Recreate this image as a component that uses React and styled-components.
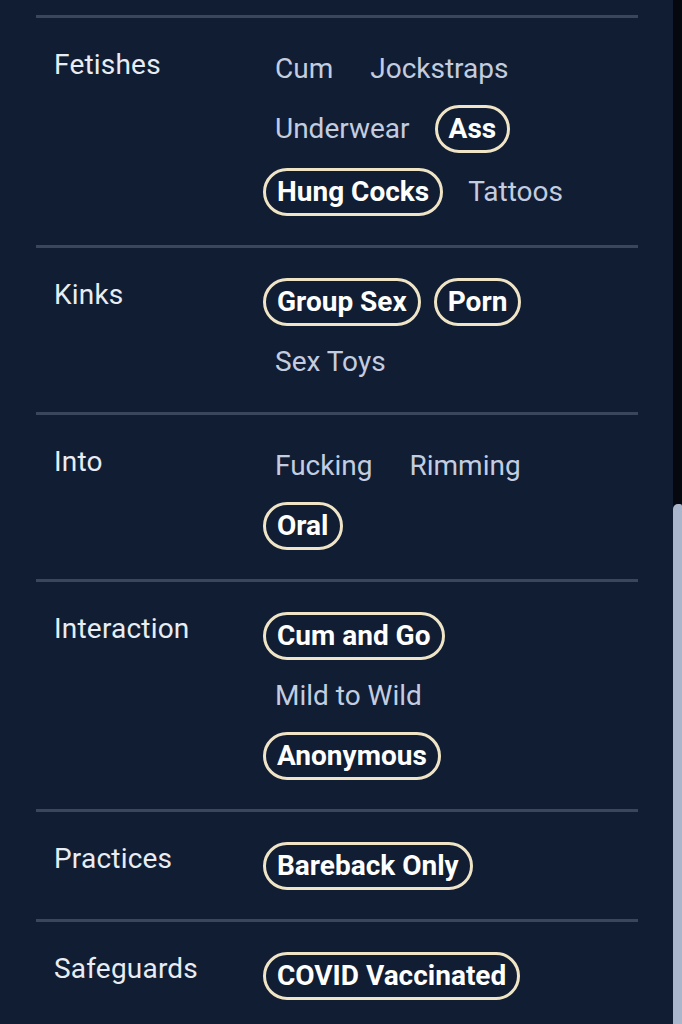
import React from "react";
import styled, { createGlobalStyle } from "styled-components";

const Global = createGlobalStyle`
  html, body { margin: 0; padding: 0; background: #111d33; }
  body { font-family: Roboto, "Noto Sans", sans-serif; }
`;

const Screen = styled.div`
  display: flex;
  width: 682px;
  height: 1024px;
  overflow: hidden;
  background: #111d33;
`;

const Content = styled.div`
  flex: 1;
  padding: 15px 35px 0 36px;
`;

const ScrollTrack = styled.div`
  width: 9px;
  display: flex;
  flex-direction: column;
  background: #05080f;
`;

const ScrollThumb = styled.div`
  margin-top: 504px;
  flex: 1;
  background: #aab6cc;
  border-top-left-radius: 5px;
  border-top-right-radius: 2px;
`;

const Section = styled.section`
  display: grid;
  grid-template-columns: 209px 1fr;
  align-items: start;
  border-top: 3px solid #39465b;
  padding: 30px 38px 29px 18px;
`;

const Label = styled.div`
  color: #e8edf4;
  font-size: 28px;
  line-height: 48px;
  margin-top: -7px;
  letter-spacing: 0.2px;
`;

const Chips = styled.div`
  display: flex;
  flex-wrap: wrap;
  align-items: center;
  column-gap: 13px;
  row-gap: 15px;
`;

const Chip = styled.span`
  display: inline-block;
  line-height: 42px;
  padding: 0 ${(p) => (p.$on ? 11 : 12)}px;
  border: ${(p) => (p.$on ? "3px solid #efe4c6" : "none")};
  border-radius: 26px;
  font-size: 28px;
  font-weight: ${(p) => (p.$on ? 700 : 400)};
  color: ${(p) => (p.$on ? "#ffffff" : "#c3cde0")};
  white-space: nowrap;
`;

const data = [
  {
    label: "Fetishes",
    tags: [["Cum"], ["Jockstraps"], ["Underwear"], ["Ass", 1], ["Hung Cocks", 1], ["Tattoos"]],
  },
  { label: "Kinks", tags: [["Group Sex", 1], ["Porn", 1], ["Sex Toys"]] },
  { label: "Into", tags: [["Fucking"], ["Rimming"], ["Oral", 1]] },
  {
    label: "Interaction",
    tags: [["Cum and Go", 1], ["Mild to Wild"], ["Anonymous", 1]],
  },
  { label: "Practices", tags: [["Bareback Only", 1]] },
  { label: "Safeguards", tags: [["COVID Vaccinated", 1]] },
];

export default function App() {
  return (
    <>
      <Global />
      <Screen>
        <Content>
          {data.map((s) => (
            <Section key={s.label}>
              <Label>{s.label}</Label>
              <Chips>
                {s.tags.map(([t, on]) => (
                  <Chip key={t} $on={!!on}>
                    {t}
                  </Chip>
                ))}
              </Chips>
            </Section>
          ))}
        </Content>
        <ScrollTrack>
          <ScrollThumb />
        </ScrollTrack>
      </Screen>
    </>
  );
}
